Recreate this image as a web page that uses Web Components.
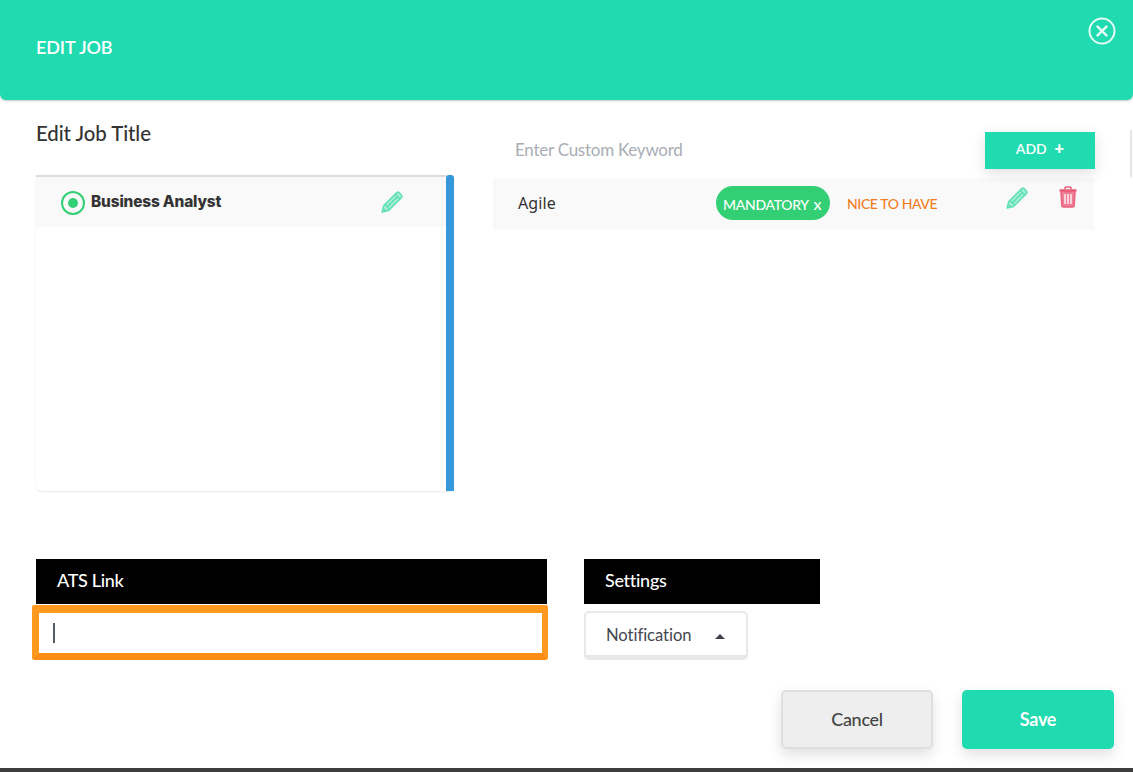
<!DOCTYPE html>
<html><head><meta charset="utf-8"><style>
html,body{margin:0;padding:0;background:#fff}
body{font-family:Lato,"Liberation Sans",sans-serif;width:1133px;height:772px;overflow:hidden}
</style></head><body>
<edit-job-modal></edit-job-modal>
<script>
const PENCIL=`<svg width="24" height="24" viewBox="0 0 24 24" fill="none" stroke="#5fe0b7" stroke-width="1.5" stroke-linejoin="round" style="display:block"><path d="M2.2 22 3.6 15.8 16.8 2.6C17.5 1.9 18.3 1.9 19 2.6L21.6 5.2C22.3 5.9 22.3 6.7 21.6 7.4L8.4 20.6Z" fill="#a6eed5"/><path d="M15.2 4.2 20 9M5 14.6 9.6 19.4M7.5 16.6 17.8 6.4M3.4 18.6 5.8 21"/></svg>`;
const TRASH=`<svg width="20" height="22" viewBox="0 0 20 22" fill="none" style="display:block"><path d="M7 3V1.8C7 1.2 7.4 1 8 1H12C12.6 1 13 1.2 13 1.8V3" stroke="#ea5f7e" stroke-width="1.6"/><path d="M1.5 3.2H18.5V5.6H1.5Z" fill="#ea5f7e"/><path d="M3 5.6H17L16.2 19.5C16.1 20.6 15.5 21 14.6 21H5.4C4.5 21 3.9 20.6 3.8 19.5Z" fill="#ee7f97" stroke="#ea5f7e" stroke-width="1.5"/><path d="M7 8V18M10 8V18M13 8V18" stroke="#fff" stroke-width="1.3"/></svg>`;
function def(name,css,html){customElements.define(name,class extends HTMLElement{constructor(){super();this.attachShadow({mode:'open'}).innerHTML=`<style>${css}</style>${html}`}})}

def('modal-header',`
:host{display:flex;justify-content:space-between;height:100px;box-sizing:border-box;background:#20dbaf;border-radius:0 0 6px 6px;box-shadow:0 1px 2px rgba(0,0,0,.22);padding:17px 17px 0 36px;color:#fff}
h1{margin:18px 0 0;font:600 18px/24px Lato,sans-serif;letter-spacing:-.1px}
svg{display:block}`,
`<h1><slot></slot></h1><svg width="28" height="28" viewBox="0 0 28 28" fill="none" stroke="#e6fbf5" stroke-width="2"><circle cx="14" cy="14" r="12.5"/><path d="M8.8 8.8 19.2 19.2M19.2 8.8 8.8 19.2" stroke-width="2.4"/></svg>`);

def('job-title-list',`
:host{display:block;width:418px}
h2{margin:0 0 30px;padding-top:21px;font:500 20.4px/24px Lato,sans-serif;color:#333;letter-spacing:-.05px}
.box{display:flex;height:316px;border-radius:0 0 6px 6px;box-shadow:0 1px 2px rgba(0,0,0,.09)}
.list{flex:1;border-top:2px solid #dcdcdc}
.row{display:flex;align-items:center;height:49.5px;background:#f9f9f9;padding:0 44px 0 25px;margin-right:-1px}
.radio{width:24px;height:24px;box-sizing:border-box;border:2px solid #33cf75;border-radius:50%;display:flex;align-items:center;justify-content:center;margin-right:6px;margin-bottom:-3px}
.radio i{width:10px;height:10px;background:#33cf75;border-radius:50%}
.t{flex:1;font:800 15.4px/20px Inter,"Noto Sans",sans-serif;color:#333;letter-spacing:-.15px;margin-top:1px}
.pen{margin-top:1px;margin-right:-1px}
.bar{width:8px;background:#3498db;border-radius:3px 3px 0 0}`,
`<h2>Edit Job Title</h2><div class="box"><div class="list"><div class="row"><span class="radio"><i></i></span><span class="t">Business Analyst</span><span class="pen">${PENCIL}</span></div></div><div class="bar"></div></div>`);

def('keyword-panel',`
:host{display:block;width:602px;padding-top:32px}
.top{display:flex;justify-content:space-between;height:37px;margin-bottom:9px}
.ph{padding-left:22px;font:400 17px/36px Lato,sans-serif;color:#a9adb4;letter-spacing:-.25px}
.add{width:110px;background:#20dbaf;color:#fff;font:600 14px/32px Lato,sans-serif;text-align:center;box-shadow:0 4px 14px rgba(0,0,0,.13);position:relative}
.add b{font-size:17px;margin-left:4px;font-weight:900}
.row{display:flex;align-items:center;height:52px;background:#f9f9f9;width:601px}
.name{width:223px;padding-left:25px;box-sizing:border-box;font:400 16px/20px "Noto Sans",Inter,sans-serif;color:#333;margin-top:-3px;letter-spacing:.1px}
.pill{width:114px;height:34px;box-sizing:border-box;background:#33cf75;color:#fff;border-radius:17px;font:500 14px/36px Lato,sans-serif;padding-left:7px;white-space:nowrap;margin-top:-2px;letter-spacing:-.3px}
.pill b{font-size:16px;font-weight:500;margin-left:2px}
.nice{margin-left:17px;width:158px;font:500 14px/20px Lato,sans-serif;color:#f07d1f;margin-top:-1px;letter-spacing:-.4px}
.pen{margin-top:-13px;margin-right:29px}.tr{margin-top:-14px}`,
`<div class="top"><span class="ph">Enter Custom Keyword</span><span class="add">ADD <b>+</b></span></div>
<div class="row"><span class="name">Agile</span><span class="pill">MANDATORY <b>x</b></span><span class="nice">NICE TO HAVE</span><span class="pen">${PENCIL}</span><span class="tr">${TRASH}</span></div>`);

def('black-label',`
:host{display:block;height:45px;box-sizing:border-box;background:#000;color:#fff;padding-left:21px;font:500 18px/43px Lato,sans-serif;letter-spacing:-.3px}`,`<slot></slot>`);

def('ats-field',`
:host{display:block;width:511px}
.in{height:55px;box-sizing:border-box;margin:1px -1px 0 -4px;border:7px solid #ff9a1f;border-top-width:8px;border-bottom-color:#fb8e17;border-right-width:6px;border-radius:3px;padding:10px 0 0 14px;background:#fff}
i{display:block;width:2px;height:20px;background:#555b66}`,
`<black-label>ATS Link</black-label><div class="in"><i></i></div>`);

def('settings-field',`
:host{display:block;width:236px}
.btn{display:flex;align-items:center;justify-content:space-between;margin-top:7px;width:164px;height:49px;box-sizing:border-box;border:2px solid #e8e8e8;border-bottom-width:5px;border-radius:5px;padding:2px 21px 0 20px;background:#fff;font:400 16.6px/22px Lato,sans-serif;color:#43474f;letter-spacing:-.05px}
u{width:0;height:0;border:5px solid transparent;border-top:0;border-bottom:5px solid #3c4048;margin-top:2px}`,
`<black-label>Settings</black-label><div class="btn"><span>Notification</span><u></u></div>`);

def('action-btn',`
:host{display:block;width:152px;height:59px;box-sizing:border-box;border-radius:5px;text-align:center;font:700 18px/55px Lato,sans-serif;letter-spacing:-.3px;box-shadow:0 6px 14px rgba(0,0,0,.12)}
:host([kind=cancel]){background:#eee;border:2px solid #dde0e2;color:#444;font-weight:500}
:host([kind=save]){background:#20dbaf;color:#fff;line-height:58px}`,`<slot></slot>`);

def('edit-job-modal',`
:host{display:flex;flex-direction:column;height:772px;box-sizing:border-box;background:#fff;border-bottom:4px solid #3d3d3d}
.top{display:flex;justify-content:space-between;padding:0 38px 0 36px;height:391px}
.mid{display:flex;gap:37px;padding:68px 0 0 36px;height:199px;box-sizing:border-box}
.foot{display:flex;justify-content:flex-end;gap:29px;padding-right:19px}
.rail{position:absolute;left:1130px;top:130px;width:2px;height:47px;background:#e6e6e6}`,
`<modal-header>EDIT JOB</modal-header><div class="top"><job-title-list></job-title-list><keyword-panel></keyword-panel></div><div class="rail"></div><div class="mid"><ats-field></ats-field><settings-field></settings-field></div><div class="foot"><action-btn kind="cancel">Cancel</action-btn><action-btn kind="save">Save</action-btn></div>`);
</script>
</body></html>
